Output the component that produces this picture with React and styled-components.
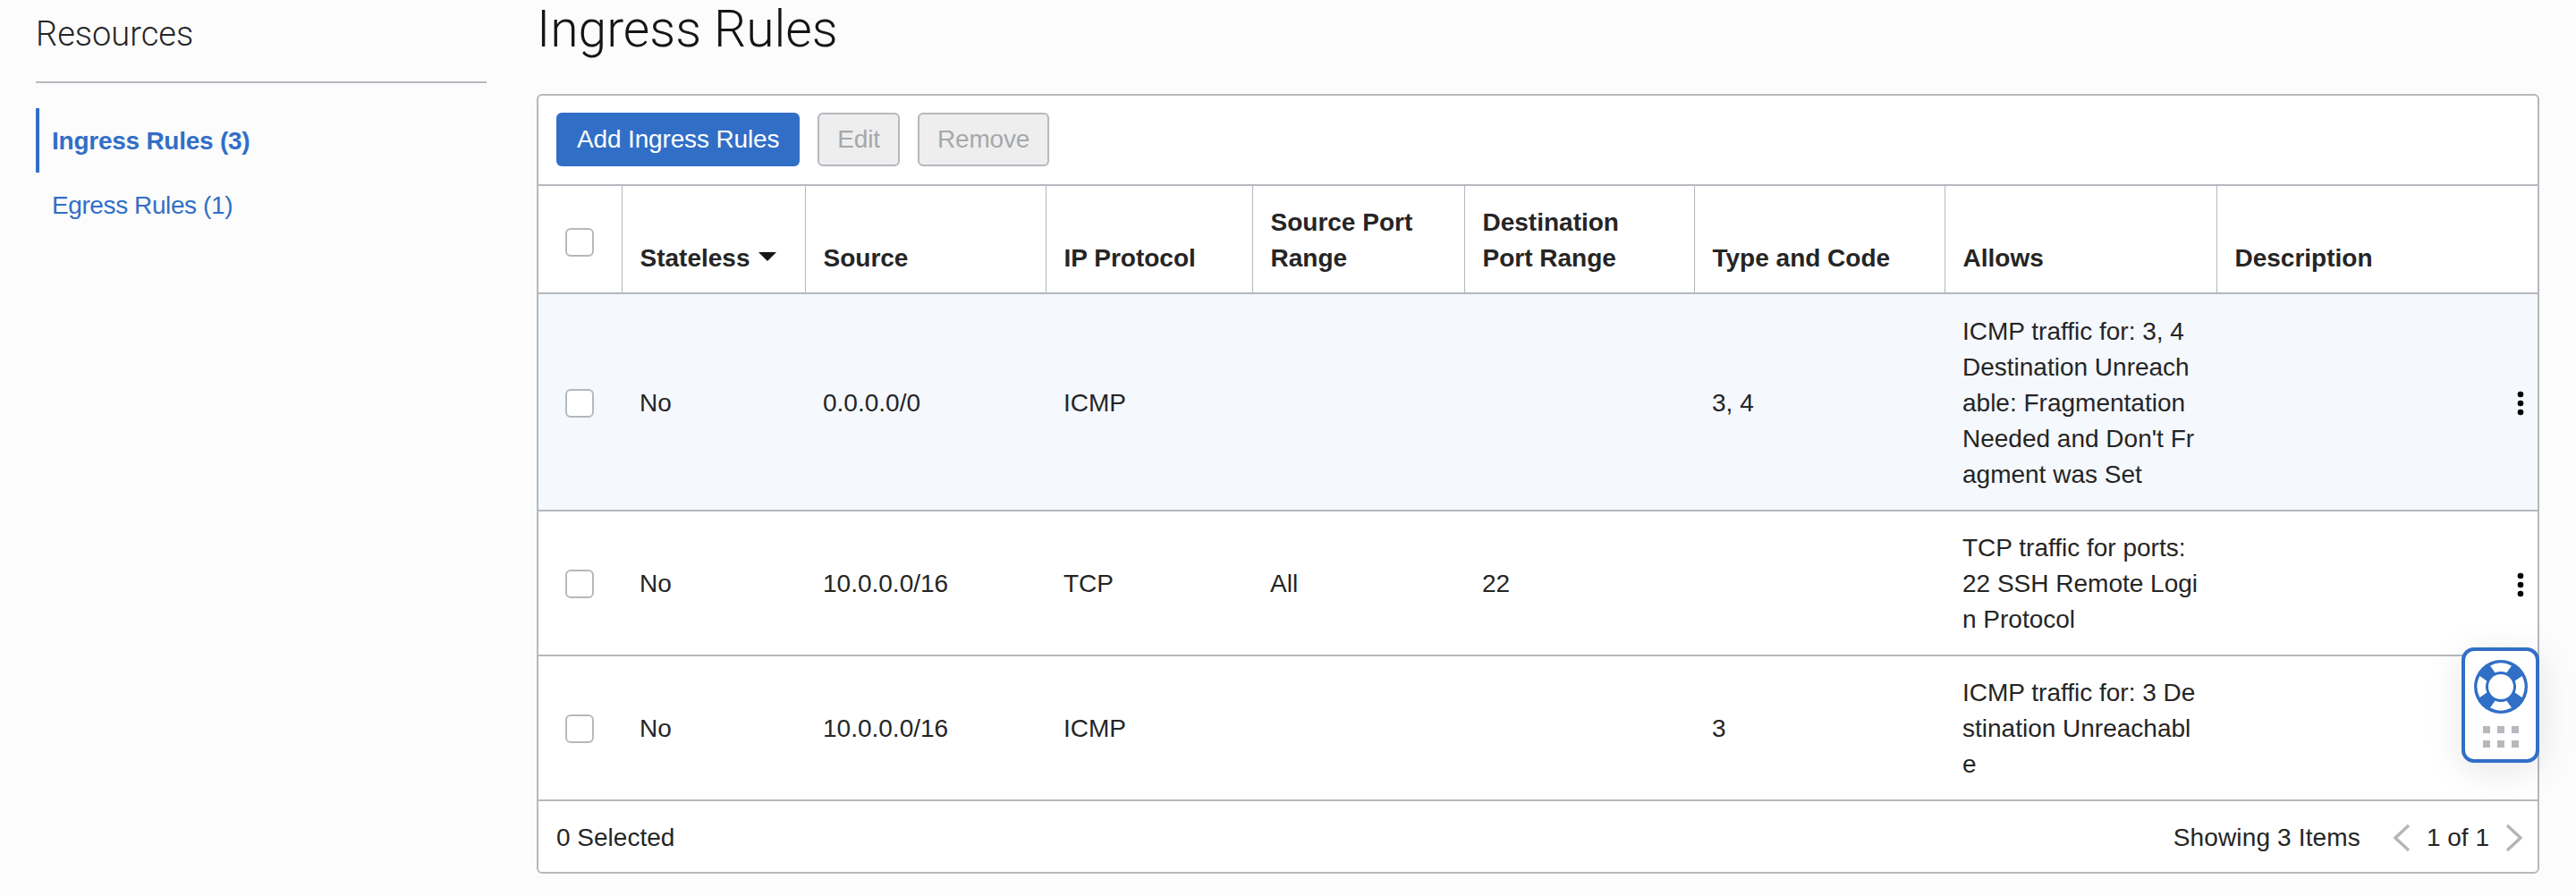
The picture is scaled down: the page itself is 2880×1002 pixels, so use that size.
import React from "react";
import styled, { createGlobalStyle } from "styled-components";

const GlobalStyle = createGlobalStyle`
  html, body {
    margin: 0;
    padding: 0;
    background: #fcfcfc;
  }
  body {
    font-family: "Liberation Sans", Arial, sans-serif;
    color: #252525;
    overflow: hidden;
  }
`;

const Page = styled.div`
  width: 2880px;
  height: 1002px;
  display: flex;
  overflow: hidden;
  position: relative;
`;

const Sidebar = styled.aside`
  width: 504px;
  margin-left: 40px;
  margin-right: 56px;
  flex: none;
`;

const SideTitle = styled.h2`
  margin: 0;
  height: 93px;
  box-sizing: border-box;
  padding-top: 13px;
  border-bottom: 2px solid #b5b8bd;
  font-family: Roboto, sans-serif;
  font-weight: 300;
  font-size: 38px;
  line-height: 50px;
  color: #252525;
`;

const SideNav = styled.nav`
  margin-top: 28px;
  display: flex;
  flex-direction: column;
`;

const SideLink = styled.a`
  height: 72px;
  box-sizing: border-box;
  padding: 2px 0 0 14px;
  display: flex;
  align-items: center;
  border-left: 4px solid ${(p) => (p.$active ? "#316fc7" : "transparent")};
  font-size: 28px;
  letter-spacing: ${(p) => (p.$active ? "-0.25px" : "-0.4px")};
  font-weight: ${(p) => (p.$active ? 700 : 400)};
  color: #316fc7;
`;

const Main = styled.main`
  width: 2239px;
  flex: none;
`;

const Title = styled.h1`
  margin: 0;
  height: 105px;
  font-family: Roboto, sans-serif;
  font-weight: 300;
  font-size: 57px;
  line-height: 66px;
  color: #161513;
`;

const Panel = styled.section`
  box-sizing: border-box;
  width: 100%;
  height: 872px;
  background: #fff;
  border: 2px solid #b5b8bd;
  border-radius: 6px;
`;

const Toolbar = styled.div`
  height: 99px;
  box-sizing: border-box;
  padding: 19px 20px 0;
  display: flex;
  gap: 20px;
  align-items: flex-start;
`;

const Button = styled.button`
  height: 60px;
  padding: 0 ${(p) => (p.$primary ? "21px" : "20px")};
  border-radius: 6px;
  font-family: inherit;
  font-size: 28px;
  letter-spacing: -0.15px;
  border: 2px solid ${(p) => (p.$primary ? "#316fc7" : "#b5b8bd")};
  background: ${(p) => (p.$primary ? "#316fc7" : "#eeeeee")};
  color: ${(p) => (p.$primary ? "#fff" : "#a6a8ab")};
`;

const Table = styled.table`
  width: 100%;
  table-layout: fixed;
  border-collapse: collapse;
  font-size: 28px;
  line-height: 40px;
`;

const Th = styled.th`
  height: 121px;
  box-sizing: border-box;
  padding: 0 20px 18px;
  text-align: left;
  vertical-align: bottom;
  font-weight: 700;
  border-top: 2px solid #b5b8bd;
  border-bottom: 2px solid #b5b8bd;
  border-left: 1px solid #b5b8bd;
  &:first-child {
    border-left: 0;
    vertical-align: top;
    padding-top: 47px;
  }
`;

const Tr = styled.tr`
  background: ${(p) => (p.$hl ? "#f5f8fd" : "#fff")};
`;

const Td = styled.td`
  box-sizing: border-box;
  height: ${(p) => p.$h}px;
  padding: 2px 20px 0;
  vertical-align: middle;
  word-break: break-all;
  border-bottom: 2px solid #b5b8bd;
`;

const MenuCell = styled(Td)`
  padding: 0 15px 0 0;
  text-align: right;
`;

const Check = styled.span`
  display: block;
  box-sizing: border-box;
  width: 32px;
  height: 32px;
  margin-left: 10px;
  background: #fff;
  border: 2px solid #b5b8bd;
  border-radius: 6px;
`;

const SortArrow = styled.span`
  display: inline-block;
  margin-left: 10px;
  vertical-align: 6px;
  border-left: 10px solid transparent;
  border-right: 10px solid transparent;
  border-top: 10px solid #161513;
`;

const Footer = styled.div`
  height: 82px;
  padding: 0 16px 0 20px;
  display: flex;
  align-items: center;
  justify-content: space-between;
  font-size: 28px;
`;

const Pager = styled.div`
  display: flex;
  align-items: center;
`;

const PageText = styled.span`
  margin: 0 18px 0 18px;
`;

const Showing = styled.span`
  margin-right: 36px;
  letter-spacing: 0.15px;
`;

const HelpWidget = styled.div`
  position: absolute;
  left: 2752px;
  top: 724px;
  box-sizing: border-box;
  width: 87px;
  height: 129px;
  padding-top: 10px;
  background: #fff;
  border: 4px solid #316fc7;
  border-radius: 14px;
  box-shadow: 0 8px 40px rgba(0, 0, 0, 0.1);
  display: flex;
  flex-direction: column;
  align-items: center;
  gap: 14px;
`;

const Grip = styled.div`
  display: grid;
  grid-template-columns: repeat(3, 8px);
  grid-auto-rows: 8px;
  gap: 8px;
  i {
    background: #b5b8bd;
  }
`;

const Kebab = () => (
  <svg width="8" height="28" viewBox="0 0 8 28" style={{ verticalAlign: "middle" }}>
    <circle cx="4" cy="4" r="3.3" fill="#000" />
    <circle cx="4" cy="14" r="3.3" fill="#000" />
    <circle cx="4" cy="24" r="3.3" fill="#000" />
  </svg>
);

const Chevron = ({ left }) => (
  <svg width="20" height="32" viewBox="0 0 20 32">
    <path
      d={left ? "M18 2 L3 16 L18 30" : "M2 2 L17 16 L2 30"}
      fill="none"
      stroke="#b5b5b5"
      strokeWidth="3.4"
    />
  </svg>
);

// ring drawn as a blue disc with four white bands cut between the rims
const LifeRing = () => (
  <svg width="60" height="60" viewBox="0 0 60 60">
    <circle cx="30" cy="30" r="30" fill="#316fc7" />
    <g fill="#fff">
      <path d="M18 6.4 A26.5 26.5 0 0 1 42 6.4 L36.5 14.3 A17 17 0 0 0 23.5 14.3 Z" />
      <path d="M18 53.6 A26.5 26.5 0 0 0 42 53.6 L36.5 45.7 A17 17 0 0 1 23.5 45.7 Z" />
      <path d="M6.4 18 A26.5 26.5 0 0 0 6.4 42 L14.3 36.5 A17 17 0 0 1 14.3 23.5 Z" />
      <path d="M53.6 18 A26.5 26.5 0 0 1 53.6 42 L45.7 36.5 A17 17 0 0 0 45.7 23.5 Z" />
      <circle cx="30" cy="30" r="14" />
    </g>
  </svg>
);

const columns = [93, 205, 269, 231, 237, 257, 280, 304, 359];

const rows = [
  {
    h: 243,
    hl: true,
    source: "0.0.0.0/0",
    protocol: "ICMP",
    port: "",
    dest: "",
    code: "3, 4",
    allows: "ICMP traffic for: 3, 4 Destination Unreachable: Fragmentation Needed and Don't Fragment was Set",
    menu: true,
  },
  {
    h: 162,
    source: "10.0.0.0/16",
    protocol: "TCP",
    port: "All",
    dest: "22",
    code: "",
    allows: "TCP traffic for ports: 22 SSH Remote Login Protocol",
    menu: true,
  },
  {
    h: 162,
    source: "10.0.0.0/16",
    protocol: "ICMP",
    port: "",
    dest: "",
    code: "3",
    allows: "ICMP traffic for: 3 Destination Unreachable",
  },
];

export default function App() {
  return (
    <Page>
      <GlobalStyle />
      <Sidebar>
        <SideTitle>Resources</SideTitle>
        <SideNav>
          <SideLink $active>Ingress Rules (3)</SideLink>
          <SideLink>Egress Rules (1)</SideLink>
        </SideNav>
      </Sidebar>
      <Main>
        <Title>Ingress Rules</Title>
        <Panel>
          <Toolbar>
            <Button $primary>Add Ingress Rules</Button>
            <Button disabled>Edit</Button>
            <Button disabled>Remove</Button>
          </Toolbar>
          <Table>
            <colgroup>
              {columns.map((w, i) => (
                <col key={i} style={{ width: w }} />
              ))}
            </colgroup>
            <thead>
              <tr>
                <Th>
                  <Check />
                </Th>
                <Th>
                  Stateless
                  <SortArrow />
                </Th>
                <Th>Source</Th>
                <Th>IP Protocol</Th>
                <Th>Source Port Range</Th>
                <Th>Destination Port Range</Th>
                <Th>Type and Code</Th>
                <Th>Allows</Th>
                <Th>Description</Th>
              </tr>
            </thead>
            <tbody>
              {rows.map((r, i) => (
                <Tr key={i} $hl={r.hl}>
                  <Td $h={r.h}>
                    <Check />
                  </Td>
                  <Td $h={r.h}>No</Td>
                  <Td $h={r.h}>{r.source}</Td>
                  <Td $h={r.h}>{r.protocol}</Td>
                  <Td $h={r.h}>{r.port}</Td>
                  <Td $h={r.h}>{r.dest}</Td>
                  <Td $h={r.h}>{r.code}</Td>
                  <Td $h={r.h}>{r.allows}</Td>
                  <MenuCell $h={r.h}>{r.menu && <Kebab />}</MenuCell>
                </Tr>
              ))}
            </tbody>
          </Table>
          <Footer>
            <span>0 Selected</span>
            <Pager>
              <Showing>Showing 3 Items</Showing>
              <Chevron left />
              <PageText>1 of 1</PageText>
              <Chevron />
            </Pager>
          </Footer>
        </Panel>
      </Main>
      <HelpWidget>
        <LifeRing />
        <Grip>
          <i /><i /><i /><i /><i /><i />
        </Grip>
      </HelpWidget>
    </Page>
  );
}
